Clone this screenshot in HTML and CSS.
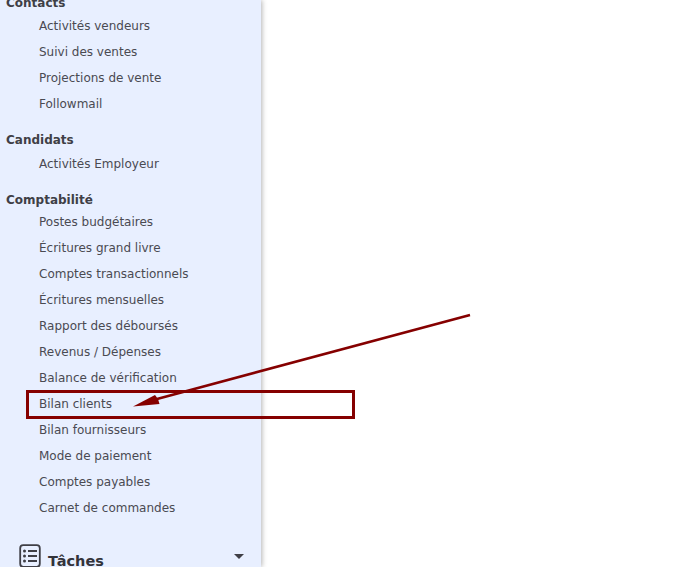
FILE: index.html
```html
<!DOCTYPE html>
<html>
	<head>
		<meta charset="utf-8" />
		<title>Bilan clients</title>
		<link rel="stylesheet" href="styles.css">
	</head>
	<body>
	<div class="sidebar">
		<h3 class="group first">Contacts</h3>
		<ul>
			<li>Activités vendeurs</li>
			<li>Suivi des ventes</li>
			<li>Projections de vente</li>
			<li>Followmail</li>
		</ul>
		<h3 class="group">Candidats</h3>
		<ul class="loose">
			<li>Activités Employeur</li>
		</ul>
		<h3 class="group">Comptabilité</h3>
		<ul>
			<li>Postes budgétaires</li>
			<li>Écritures grand livre</li>
			<li>Comptes transactionnels</li>
			<li>Écritures mensuelles</li>
			<li>Rapport des déboursés</li>
			<li>Revenus / Dépenses</li>
			<li>Balance de vérification</li>
			<li>Bilan clients</li>
			<li>Bilan fournisseurs</li>
			<li>Mode de paiement</li>
			<li>Comptes payables</li>
			<li>Carnet de commandes</li>
		</ul>
		<div class="section">
			<svg class="section-icon" width="22" height="24" viewBox="0 0 22 24" fill="none" stroke="#3f3f46">
				<rect x="1.2" y="1.2" width="19.6" height="21.6" rx="3" stroke-width="1.8"/>
				<path d="M9 7h9M9 12h9M9 17h9" stroke-width="1.8"/>
				<circle cx="5.5" cy="7" r="1.5" fill="#3f3f46" stroke="none"/>
				<circle cx="5.5" cy="12" r="1.5" fill="#3f3f46" stroke="none"/>
				<circle cx="5.5" cy="17" r="1.5" fill="#3f3f46" stroke="none"/>
			</svg>
			<span class="section-name">Tâches</span>
			<span class="caret"></span>
		</div>
	</div>
	<svg class="markup" width="699" height="567" viewBox="0 0 699 567">
		<rect x="27.5" y="391.5" width="326" height="26" fill="none" stroke="#850000" stroke-width="3"/>
		<path d="M470 315L157 399" fill="none" stroke="#850000" stroke-width="2.6"/>
		<path d="M133 406.5L155 395L158 399L159.5 404Z" fill="#850000"/>
	</svg>
	</body>
</html>
```
FILE: styles.css
```css
*{margin: 0;padding: 0;box-sizing: border-box;}
html,body{height: 100%;overflow: hidden;}
body{background: #fff;font-family: "DejaVu Sans",Verdana,sans-serif;position: relative;}
.sidebar{width: 261px;height: 567px;overflow: hidden;background: #e8efff;box-shadow: 1px 0 5px rgba(0,0,0,0.3);color: #4a4a52;}
.group{font-size: 12px;font-weight: bold;line-height: 16px;height: 16px;padding-left: 6px;margin-top: 15px;color: #3f3f46;}
.group.first{margin-top: -5px;margin-bottom: 2px;}
ul{list-style-type: none;margin-top: 1px;}
ul.loose{margin-top: 3px;}
li{height: 26px;line-height: 26px;font-size: 12px;padding-left: 39px;}
.section{display: flex;align-items: center;margin-top: 21px;padding-left: 19px;height: 28px;padding-right: 17px;}
.section-icon{flex: none;}
.section-name{font-size: 14.5px;font-weight: bold;color: #33333a;margin-left: 7px;margin-top: 9px;flex: 1;}
.caret{width: 0;height: 0;border-left: 5px solid transparent;border-right: 5px solid transparent;border-top: 5px solid #3f3f46;}
.markup{position: absolute;left: 0;top: 0;}
```
